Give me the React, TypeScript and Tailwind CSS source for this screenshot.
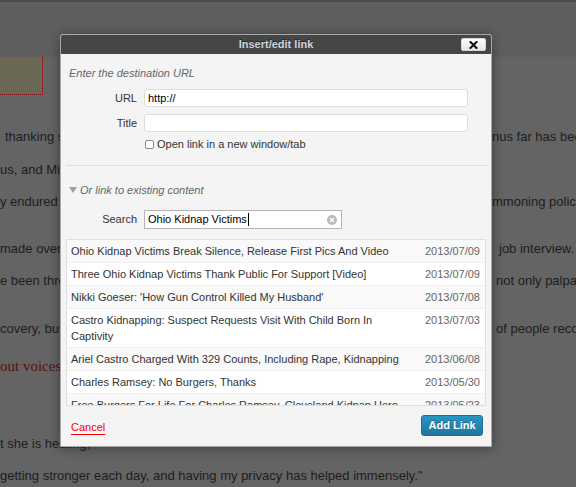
import React from 'react';

const RESULTS = [
  { title: 'Ohio Kidnap Victims Break Silence, Release First Pics And Video', date: '2013/07/09' },
  { title: 'Three Ohio Kidnap Victims Thank Public For Support [Video]', date: '2013/07/09' },
  { title: "Nikki Goeser: 'How Gun Control Killed My Husband'", date: '2013/07/08' },
  { title: 'Castro Kidnapping: Suspect Requests Visit With Child Born In Captivity', date: '2013/07/03' },
  { title: 'Ariel Castro Charged With 329 Counts, Including Rape, Kidnapping', date: '2013/06/08' },
  { title: 'Charles Ramsey: No Burgers, Thanks', date: '2013/05/30' },
  { title: 'Free Burgers For Life For Charles Ramsey, Cleveland Kidnap Hero', date: '2013/05/23' },
];

// page text behind the overlay; only the bits outside the dialog are drawn
const BgLine: React.FC<{ left: string; right?: string; gap?: string; className?: string }> = ({
  left,
  right,
  gap = 'w-[432px]',
  className = '',
}) => (
  <div className={`flex h-[16px] leading-[16px] whitespace-nowrap text-[13px] text-[#1d1d1d] ${className}`}>
    {right ? (
      <>
        <span className="w-[60px] shrink-0 overflow-hidden">{left}</span>
        <span className={`${gap} shrink-0`} />
        <span>{right}</span>
      </>
    ) : (
      <span>{left}</span>
    )}
  </div>
);

const Dialog: React.FC = () => (
  <div className="absolute left-[60px] top-[34px] w-[432px] h-[413px] flex flex-col rounded-t-[3px] border border-[#a8a8a8] bg-[#f4f4f4] shadow-[0_1px_12px_rgba(0,0,0,0.4)] text-[11px] text-[#333]">
    {/* title bar */}
    <div className="relative h-[19px] shrink-0 bg-[#464646] flex items-center justify-center rounded-t-[2px]">
      <span className="font-bold text-[11px] text-[#cdd6e0] [text-shadow:0_-1px_0_#222]">Insert/edit link</span>
      <button className="absolute left-[400px] top-[3px] w-[25px] h-[13px] rounded-[2px] border border-[#d8d8d8] bg-gradient-to-b from-white to-[#e6e6e6] flex items-center justify-center">
        <svg width="9" height="8" viewBox="0 0 9 8">
          <path d="M1.5 1 L7.5 7 M7.5 1 L1.5 7" stroke="#111" strokeWidth="2" strokeLinecap="square" />
        </svg>
      </button>
    </div>

    {/* url options */}
    <div className="px-[8px] pt-[12px]">
      <p className="italic text-[#666] leading-[14px]">Enter the destination URL</p>
      <div className="mt-[9px] flex items-center">
        <label className="w-[74px] text-right pr-[6px] text-[#333]">URL</label>
        <div className="ml-px w-[324px] h-[18px] rounded-[3px] border border-[#dcdcdc] bg-white px-[3px] flex items-center text-black">http://</div>
      </div>
      <div className="mt-[7px] flex items-center">
        <label className="w-[74px] text-right pr-[6px] text-[#333]">Title</label>
        <div className="ml-px w-[324px] h-[18px] rounded-[3px] border border-[#dcdcdc] bg-white" />
      </div>
      <div className="mt-[6px] ml-[76px] flex items-center h-[12px]">
        <span className="w-[9px] h-[9px] rounded-[2px] border border-[#8a8a8a] bg-white" />
        <span className="ml-[3px] text-[#333]">Open link in a new window/tab</span>
      </div>
    </div>

    <div className="mt-[15px] ml-[5px] mr-[4px] h-px bg-[#dedede]" />

    {/* internal linking */}
    <div className="px-[8px] pt-[17px]">
      <div className="flex items-center leading-[14px]">
        <svg width="8" height="6" viewBox="0 0 8 6" className="mr-[3px]">
          <path d="M0 0 H8 L4 6 Z" fill="#a0a0a0" />
        </svg>
        <span className="italic text-[#666]">Or link to existing content</span>
      </div>
      <div className="mt-[13px] flex items-center">
        <label className="w-[74px] text-right pr-[6px] text-[#333]">Search</label>
        <div className="ml-px relative w-[198px] h-[19px] border border-[#b4b4b4] bg-white px-[3px] flex items-center text-black">
          <span>Ohio Kidnap Victims</span>
          <span className="ml-px w-px h-[13px] bg-black" />
          <span className="absolute right-[4px] top-[4px] w-[10px] h-[10px] rounded-full bg-[#b8b8b8] flex items-center justify-center">
            <svg width="6" height="6" viewBox="0 0 6 6">
              <path d="M1 1 L5 5 M5 1 L1 5" stroke="#fff" strokeWidth="1.4" />
            </svg>
          </span>
        </div>
      </div>
    </div>

    <div className="mt-[10px] mx-[5px] h-[167px] shrink-0 overflow-hidden border border-[#dfdfdf] bg-white">
      {RESULTS.map((r, i) => (
        <div
          key={i}
          className={`flex justify-between border-b border-[#f0f0f0] pl-[4px] pr-[5px] py-[3px] leading-[16px] ${
            i % 2 === 0 ? 'bg-[#f9f9f9]' : 'bg-white'
          }`}
        >
          <span className="w-[330px] text-[#333]">{r.title}</span>
          <span className="text-[#666]">{r.date}</span>
        </div>
      ))}
    </div>

    {/* footer */}
    <div className="flex-1 flex items-center justify-between pl-[10px] pr-[8px]">
      <a className="text-[#f00] underline underline-offset-[3px] decoration-[#f00] leading-[14px] mt-[1px]">Cancel</a>
      <button className="w-[62px] h-[21px] rounded-[3px] border border-[#1f6e94] bg-gradient-to-b from-[#2a95c5] to-[#21759b] text-white font-bold text-[11px] [text-shadow:0_-1px_0_rgba(0,0,0,0.3)] mb-px">
        Add Link
      </button>
    </div>
  </div>
);

const App: React.FC = () => {
  return (
    <div
      className="relative w-[576px] h-[487px] overflow-hidden bg-[#646464]"
      style={{ fontFamily: '"Liberation Sans", Arial, sans-serif' }}
    >
      <div className="h-[57px] bg-[#5f5f5f] border-t-2 border-[#4b4b4b]" />
      <div className="w-[43px] h-[38px] bg-[#6b6956] border-r border-b border-dotted border-[#7a0a0a]" />

      <BgLine className="mt-[34px] pl-[5px]" left="thanking supporters" right="nus far has been" gap="w-[427px]" />
      <BgLine className="mt-[17px]" left="us, and Michelle Knight" right=" " />
      <BgLine className="mt-[16px]" left="y endured their ordeal" right="mmoning police" />
      <BgLine className="mt-[31px]" left="made over the years" right="job interview." gap="w-[439px]" />
      <BgLine className="mt-[16px]" left="e been through something" right="not only palpable" gap="w-[436px]" />
      <BgLine className="mt-[32px]" left="covery, but also to" right="of people recovering" gap="w-[436px]" />
      <div
        className="mt-[20px] h-[18px] leading-[18px] text-[15px] text-[#5c0f0f] whitespace-nowrap"
        style={{ fontFamily: '"Liberation Serif", "Times New Roman", serif' }}
      >
        out voices
      </div>
      <BgLine className="mt-[61px]" left="t she is healing," />
      <BgLine className="mt-[16px]" left={'getting stronger each day, and having my privacy has helped immensely."'} />

      <Dialog />
    </div>
  );
};

export default App;
